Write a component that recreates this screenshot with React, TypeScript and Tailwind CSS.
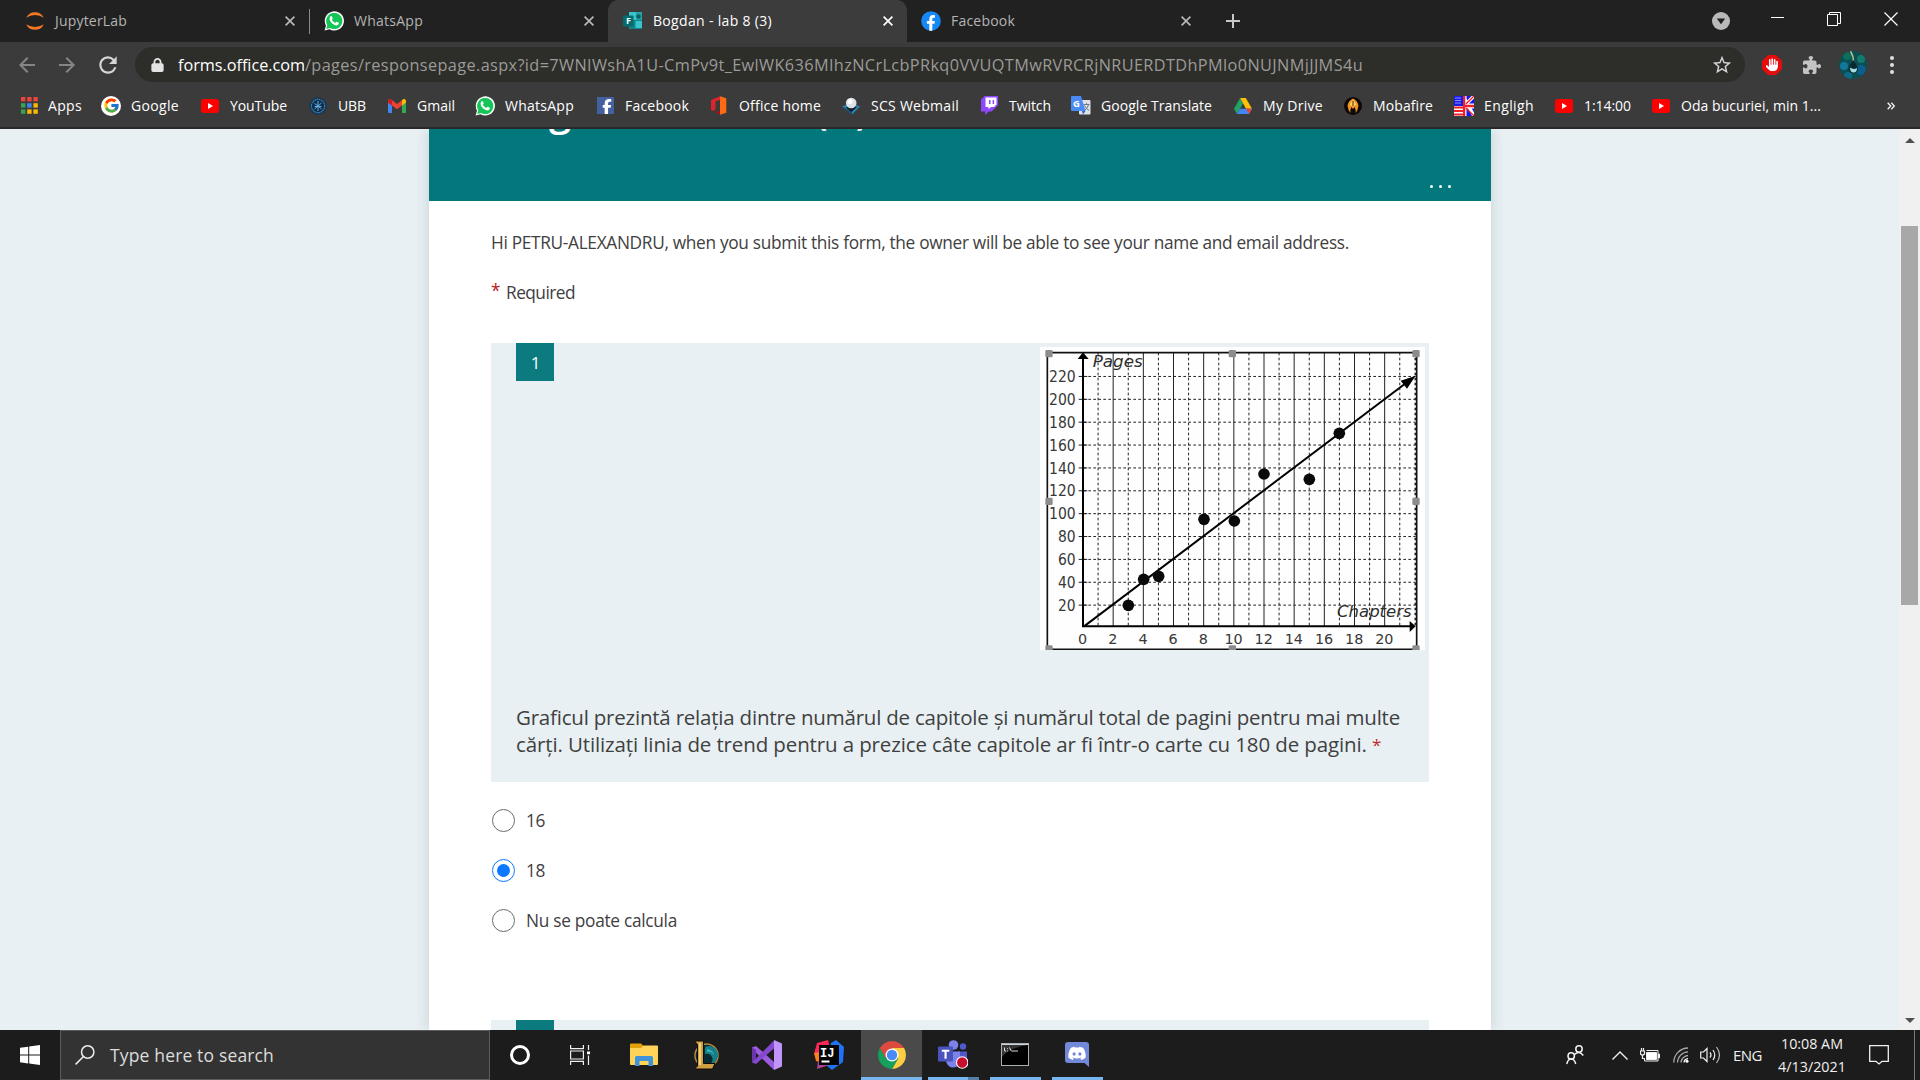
import { useLayoutEffect, useRef, type ReactNode } from "react";
import { FcGoogle } from "react-icons/fc";
import { FaDiscord, FaFacebookF, FaHand, FaLock, FaPuzzlePiece } from "react-icons/fa6";
import { MdArrowBack, MdArrowForward, MdRefresh, MdStarBorder } from "react-icons/md";

/* Single-line label whose tracking is evened out to span `w` pixels. */
function Label({ w, className = "", children }: { w: number; className?: string; children: string }) {
  const ref = useRef<HTMLSpanElement>(null);
  useLayoutEffect(() => {
    const el = ref.current;
    if (!el) return;
    el.style.letterSpacing = "0px";
    const natural = el.getBoundingClientRect().width;
    el.style.letterSpacing = `${(w - natural) / children.length}px`;
  }, [w, children]);
  return (
    <span ref={ref} className={`inline-block whitespace-pre shrink-0 ${className}`}>
      {children}
    </span>
  );
}

/* ---------- small brand icons ---------- */

const WhatsApp = () => (
  <svg viewBox="0 0 20 20" className="size-5">
    <path d="M0.6 19.6 2 14.6A9.6 9.6 0 1 1 5.6 18.2Z" fill="#fff" />
    <path d="M2.2 18 3.3 14.2A8.1 8.1 0 1 1 6 16.9Z" fill="#14c656" />
    <path d="M6.6 5.2c.5-.4 1-.3 1.3.2l.8 1.8c.1.5-.7 1.1-.8 1.5.7 1.400 1.800 2.400 3.300 3.100.5 0 .9-1.200 1.500-1.100l1.900.9c.6.4-.1 2-.8 2.400-1.400.9-3.300.1-4.900-1C7.200 11.800 5.800 9.900 5.600 8c-.1-1 .3-2.200 1-2.800Z" fill="#fff" />
  </svg>
);
const Jupyter = () => (
  <svg viewBox="0 0 20 20" className="size-5">
    <path d="M1.300 6.800Q3.500 1.200 10 1.200t8.700 5.600Q15 4.100 10 4.100T1.300 6.800Z" fill="#f37726" />
    <path d="M1.300 13.200Q3.500 18.800 10 18.800t8.700-5.600Q15 15.900 10 15.900T1.300 13.200Z" fill="#f37726" />
  </svg>
);
const Forms = () => (
  <svg viewBox="0 0 20 20" className="size-5">
    <path d="M6 1h13v17H6Z" fill="#128387" />
    <path d="M6 1h7v8H6Z" fill="#37c6d0" />
    <path d="M13 1h6v8h-6Z" fill="#25a3a8" />
    <path d="M12.500 10h6.500v7h-6.500Z" fill="#36c5cf" />
    <circle cx="15.500" cy="5.500" r="2.200" fill="#0f5f63" />
    <rect x="0" y="4.500" width="10.500" height="11" rx="0.800" fill="#036c70" />
    <text x="3" y="13.200" fill="#fff" fontSize="9" fontWeight="700" fontFamily="Open Sans, sans-serif">F</text>
  </svg>
);
const FacebookRound = () => (
  <svg viewBox="0 0 20 20" className="size-5">
    <circle cx="10" cy="10" r="9.800" fill="#1488f5" />
    <path d="M8.300 19.700v-6.900H5.900V10h2.400V7.900c0-2.500 1.400-3.800 3.600-3.800l2.100.2v2.400h-1.200c-1.200 0-1.500.7-1.500 1.500V10h2.600l-.4 2.800h-2.200v6.900Z" fill="#fff" />
  </svg>
);
const Apps = () => (
  <svg viewBox="0 0 17 17" className="size-[17px]">
    {["#e8453c", "#e8453c", "#e8453c", "#34a353", "#4285f4", "#f9b808", "#34a353", "#f9b808", "#f9b808"].map((c, i) => (
      <rect key={i} x={(i % 3) * 6.200} y={Math.floor(i / 3) * 6.200} width="4.400" height="4.400" fill={c} />
    ))}
  </svg>
);
const GoogleRound = () => (
  <span className="flex size-5 items-center justify-center rounded-full bg-white">
    <FcGoogle className="size-[17px]" />
  </span>
);
const YouTube = () => (
  <svg viewBox="0 0 18 14" className="h-[14px] w-[18px]">
    <rect width="18" height="14" rx="3" fill="#f00" />
    <path d="M7 4v6l5-3Z" fill="#fff" />
  </svg>
);
const Ubb = () => (
  <svg viewBox="0 0 18 18" className="size-[18px]">
    <circle cx="9" cy="9" r="8.700" fill="#17364f" />
    <circle cx="9" cy="9" r="6.600" fill="#0f2d49" stroke="#3d83bd" strokeWidth="1.200" strokeDasharray="1.500 .6" />
    <path d="M9 4v10M5.500 6.500l3.500 2.500 3.500-3M5.500 12 9 9l3.500 3M5.500 9.500h7" stroke="#69aee0" fill="none" />
  </svg>
);
const Gmail = () => (
  <svg viewBox="0 0 18 14" className="h-[14px] w-[18px]">
    <path d="M0 2v11a1 1 0 0 0 1 1h3V5Z" fill="#4285f4" />
    <path d="M18 2v11a1 1 0 0 1-1 1h-3V5Z" fill="#34a853" />
    <path d="M0 3.200V2C0 .2 1.800-.5 3.200.5L9 5l5-3.700v5.200L9 10.300 0 3.600Z" fill="#ea4335" />
    <path d="M14 1.200 14.800.5C16.200-.5 18 .2 18 2v1.500l-4 3Z" fill="#fbbc04" />
    <path d="M0 2.500v1.100l4 3V1.200L3.200.5C1.800-.5 0 .2 0 2Z" fill="#c5221f" />
  </svg>
);
const FacebookSquare = () => (
  <span className="flex size-[17px] items-end justify-end overflow-hidden bg-[#4460a0] pr-[2px]">
    <FaFacebookF className="h-[15px] w-[10px] text-white" />
  </span>
);
const Office = () => (
  <svg viewBox="0 0 16 19" className="h-[19px] w-4">
    <path d="M0 4 9 .3V4L4.500 5.300v8L2 15l-2-1.200Z" fill="#d8262c" />
    <path d="M9 .3 15.300 2.300V16.700L9 18.700Z" fill="#ff6a13" />
    <path d="M2.200 15 9 15.800v2.900Z" fill="#a3131c" />
  </svg>
);
const Webmail = () => (
  <svg viewBox="0 0 18 18" className="size-[18px]">
    <path d="M0 9.500 9 6l9 3.500-8 8Z" fill="#2a86b5" />
    <path d="M0 9.500 10 17.500V14Z" fill="#174f78" />
    <path d="m4 10.500 5.500 4.500 5.500-5L9 8Z" fill="#162028" />
    <circle cx="9.200" cy="6" r="5.300" fill="#dce3e6" />
    <circle cx="8" cy="4.500" r="2.500" fill="#fff" />
  </svg>
);
const Twitch = () => (
  <svg viewBox="0 0 17 19" className="h-[19px] w-[17px]">
    <path d="M3.600 0 0 3.500v12h4.200V19l3.600-3.500h2.800L17 9.200V0Z" fill="#9146ff" />
    <path d="M4.500 1.500h11v7L13 11h-3l-2.500 2.300V11h-3Z" fill="#fff" />
    <path d="M8 4h1.500v4H8Zm3.600 0h1.500v4h-1.500Z" fill="#9146ff" />
  </svg>
);
const Translate = () => (
  <svg viewBox="0 0 20 19" className="h-[19px] w-5">
    <rect x="8" y="4" width="11.500" height="14.500" rx="1" fill="#dfe1e4" />
    <path d="M0 1a1 1 0 0 1 1-1h9l4.500 15H1a1 1 0 0 1-1-1Z" fill="#4a8af4" />
    <text x="2" y="11" fill="#fff" fontSize="9.500" fontWeight="700" fontFamily="Open Sans, sans-serif">G</text>
    <path d="M12.500 8.500h6M15.500 7v1.500M17.500 8.500q-.6 3.500-3.500 5.500M13.500 9.500q1.500 3 4.500 5" stroke="#6b7a8d" fill="none" />
    <path d="M11 15h3.500L12 18.500Z" fill="#3262c4" />
  </svg>
);
const Drive = () => (
  <svg viewBox="0 0 18 16" className="h-4 w-[18px]">
    <path d="M6.200 0 0 10.700 3 16l6-10.600Z" fill="#1fa463" />
    <path d="M6.200 0h5.600L18 10.700h-6Z" fill="#ffc107" />
    <path d="M3 16l3-5.300h12L15 16Z" fill="#4285f4" />
    <path d="M12 10.700h6L15 16Z" fill="#ea4335" />
  </svg>
);
const Mobafire = () => (
  <svg viewBox="0 0 18 18" className="size-[18px]">
    <circle cx="9" cy="9" r="9" fill="#0c0908" />
    <path d="M9 1.500q4.500 2 5.500 7-.5 5-3 7.500.5-4-1-6L9 12l-1.500-2q-1.500 2-1 6-2.500-2.500-3-7.500 1-5 5.500-7Z" fill="#f0912a" />
    <path d="M9 3q2.500 1.500 3 5L9 9.500 6 8q.5-3.500 3-5Z" fill="#ffd75a" />
    <path d="M8.500 4h1v5h-1Z" fill="#40210c" />
  </svg>
);
const Flag = () => (
  <svg viewBox="0 0 20 20" className="size-5">
    <rect width="20" height="20" fill="#1518e8" />
    <path d="M9 0 20 20M20 0 9 11" stroke="#fff" strokeWidth="3.400" fill="none" />
    <path d="M10 0v20M9 10h11" stroke="#fff" strokeWidth="5" />
    <path d="M10 0v20M9 10h11" stroke="#f0202a" strokeWidth="2.600" />
    <path d="M20 0l-8 8M20 20l-8-8" stroke="#f0202a" strokeWidth="1.400" />
    <rect width="9" height="10" fill="#1a1de6" />
    <path d="M1.500 2h6M1.500 4.500h6M1.500 7h6" stroke="#fff" strokeDasharray="1 1" />
    <rect y="10" width="9" height="10" fill="#fff" />
    <path d="M0 11.500h9M0 15h9M0 18.500h9" stroke="#f0202a" strokeWidth="1.800" />
  </svg>
);

/* ---------- browser chrome ---------- */

function Close({ active = false }: { active?: boolean }) {
  return (
    <svg viewBox="0 0 10 10" className={`size-[10px] ${active ? "text-white" : "text-[#b8b8b8]"}`}>
      <path d="m.6.6 8.800 8.800M9.400.6.6 9.400" stroke="currentColor" strokeWidth="1.700" />
    </svg>
  );
}

function Tab({ icon, title, w, active = false }: { icon: ReactNode; title: string; w: number; active?: boolean }) {
  return (
    <div
      className={`flex h-[42px] w-[299px] shrink-0 items-center pr-[14px] pl-[15px] ${
        active ? "rounded-t-[10px] bg-[#3c3c3c] text-white" : "text-[#b4b4b4]"
      }`}
    >
      {icon}
      <Label w={w} className="ml-[10px] text-[14px] leading-5">
        {title}
      </Label>
      <div className="ml-auto flex">
        <Close active={active} />
      </div>
    </div>
  );
}

function TabStrip() {
  return (
    <div className="flex h-[42px] bg-[#212121]">
      <div className="w-[10px]" />
      <Tab icon={<Jupyter />} title="JupyterLab" w={72} />
      <div className="mt-[9px] -mr-px h-[25px] w-px bg-[#8a8a8a]" />
      <Tab icon={<WhatsApp />} title="WhatsApp" w={69} />
      <Tab icon={<Forms />} title="Bogdan - lab 8 (3)" w={119} active />
      <div className="-ml-px">
        <Tab icon={<FacebookRound />} title="Facebook" w={64} />
      </div>
      <svg viewBox="0 0 16 16" className="mt-[13px] ml-[20px] size-4">
        <path d="M8 1v14M1 8h14" stroke="#c8c8c8" strokeWidth="2" />
      </svg>
      <div className="ml-auto flex items-start text-white">
        <svg viewBox="0 0 18 18" className="mt-3 mr-[41px] size-[18px]">
          <circle cx="9" cy="9" r="9" fill="#b9b9b9" />
          <path d="M4.800 6.500h8.400L9 12.300Z" fill="#212121" />
        </svg>
        <div className="mt-[17px] mr-[43px] h-px w-[13px] bg-white" />
        <svg viewBox="0 0 14 14" className="mt-3 mr-[43px] size-[14px]" fill="none" stroke="currentColor">
          <path d="M.5 2.500h10v11H.5Z M2.500 2.500v-2h11v11h-3" />
        </svg>
        <svg viewBox="0 0 14 14" className="mt-3 mr-[22px] size-[14px]" fill="none" stroke="currentColor" strokeWidth="1.200">
          <path d="m.5.500 13 13M13.500.500l-13 13" />
        </svg>
      </div>
    </div>
  );
}

function AddressBar() {
  return (
    <div className="flex h-[45px] items-center bg-[#3b3b3b] pl-[15px] text-[#c9c9c9]">
      <MdArrowBack className="size-6 text-[#868686]" />
      <MdArrowForward className="ml-4 size-6 text-[#868686]" />
      <MdRefresh className="ml-4 size-[26px] text-[#d6d6d6]" />
      <div className="ml-[14px] flex h-[35px] w-[1610px] items-center rounded-full bg-[#2d2d29] pl-4">
        <FaLock className="h-[14px] w-[13px] text-[#e4e4e4]" />
        <Label w={127} className="ml-[14px] text-[16.3px] leading-6 text-white">
          forms.office.com
        </Label>
        <Label w={1058} className="text-[16.3px] leading-6 text-[#9b9b98]">
          /pages/responsepage.aspx?id=7WNIWshA1U-CmPv9t_EwlWK636MIhzNCrLcbPRkq0VVUQTMwRVRCRjNRUERDTDhPMlo0NUJNMjJJMS4u
        </Label>
        <MdStarBorder className="mr-3 ml-auto size-[22px] text-[#d6d6d6]" />
      </div>
      <svg viewBox="0 0 20 20" className="ml-[17px] size-5">
        <path d="M6 0h8l6 6v8l-6 6H6l-6-6V6Z" fill="#e40d0d" />
        <g transform="translate(3.700 3.300)">
          <FaHand size={13} color="#fff" />
        </g>
      </svg>
      <FaPuzzlePiece className="ml-[21px] size-[18px] text-[#c3c3c3]" />
      <svg viewBox="0 0 28 28" className="ml-[18px] size-7">
        <defs>
          <clipPath id="avatar">
            <circle cx="14" cy="14" r="14" />
          </clipPath>
        </defs>
        <g clipPath="url(#avatar)">
          <rect width="28" height="28" fill="#0b4f52" />
          <circle cx="5" cy="15" r="4" fill="#12779b" />
          <circle cx="22" cy="19" r="5" fill="#0c5e8c" />
          <circle cx="22" cy="8" r="4" fill="#147a6f" />
          <circle cx="8" cy="5" r="4" fill="#0c6f5c" />
          <circle cx="9" cy="25" r="4" fill="#0d6a86" />
          <path d="M11.500 0q3.500 6 3 12" stroke="#b9c58a" strokeWidth="1.500" fill="none" />
          <path d="M14.500 9q-6 7-4.600 10.800 1.700 3 5.400 2.500 4.400-1.400 3.400-5.500-1.500-4-4.200-7.800Z" fill="#082b31" />
          <path d="M11 16.500q3.500 2.500 7 .5 0 4.500-3.500 4.500T11 16.500Z" fill="#a6dce2" />
        </g>
      </svg>
      <svg viewBox="0 0 4 18" className="ml-[23px] h-[18px] w-1" fill="#e0e0e0">
        <circle cx="2" cy="2" r="2" />
        <circle cx="2" cy="9" r="2" />
        <circle cx="2" cy="16" r="2" />
      </svg>
    </div>
  );
}

const bookmarks: { icon: ReactNode; title: string; w: number; gap: string; iconBox: string }[] = [
  { icon: <Apps />, title: "Apps", w: 34, gap: "mr-[19px]", iconBox: "w-[18px] mr-[10px]" },
  { icon: <GoogleRound />, title: "Google", w: 48, gap: "mr-[21px]", iconBox: "w-5 mr-[10px]" },
  { icon: <YouTube />, title: "YouTube", w: 57, gap: "mr-[21px]", iconBox: "w-5 mr-[10px]" },
  { icon: <Ubb />, title: "UBB", w: 28, gap: "mr-[21px]", iconBox: "w-5 mr-[10px]" },
  { icon: <Gmail />, title: "Gmail", w: 38, gap: "mr-[20px]", iconBox: "w-5 mr-[10px]" },
  { icon: <WhatsApp />, title: "WhatsApp", w: 69, gap: "mr-[21px]", iconBox: "w-5 mr-[10px]" },
  { icon: <FacebookSquare />, title: "Facebook", w: 64, gap: "mr-[20px]", iconBox: "w-5 mr-[10px]" },
  { icon: <Office />, title: "Office home", w: 82, gap: "mr-[20px]", iconBox: "w-5 mr-[10px]" },
  { icon: <Webmail />, title: "SCS Webmail", w: 88, gap: "mr-[20px]", iconBox: "w-5 mr-[10px]" },
  { icon: <Twitch />, title: "Twitch", w: 42, gap: "mr-[20px]", iconBox: "w-5 mr-[10px]" },
  { icon: <Translate />, title: "Google Translate", w: 111, gap: "mr-[21px]", iconBox: "w-5 mr-[10px]" },
  { icon: <Drive />, title: "My Drive", w: 60, gap: "mr-[20px]", iconBox: "w-5 mr-[10px]" },
  { icon: <Mobafire />, title: "Mobafire", w: 60, gap: "mr-[21px]", iconBox: "w-5 mr-[10px]" },
  { icon: <Flag />, title: "Engligh", w: 50, gap: "mr-[20px]", iconBox: "w-5 mr-[10px]" },
  { icon: <YouTube />, title: "1:14:00", w: 47, gap: "mr-[20px]", iconBox: "w-5 mr-[10px]" },
  { icon: <YouTube />, title: "Oda bucuriei, min 1...", w: 140, gap: "mr-[66px]", iconBox: "w-5 mr-[10px]" },
];

function BookmarksBar() {
  return (
    <div className="flex h-[42px] items-center border-b-2 border-[#282828] bg-[#3b3b3b] pb-[3px] pl-[20px] text-white">
      {bookmarks.map((b, i) => (
        <div key={i} className={`flex shrink-0 items-center ${b.gap}`}>
          <div className={`flex shrink-0 justify-center ${b.iconBox}`}>{b.icon}</div>
          <Label w={b.w} className="text-[14px] leading-5">
            {b.title}
          </Label>
        </div>
      ))}
      <svg viewBox="0 0 8 8" className="size-2" fill="none" stroke="#eee" strokeWidth="1.400">
        <path d="m.7.700 3 3.300-3 3.300M4.300.700l3 3.300-3 3.300" />
      </svg>
    </div>
  );
}

/* ---------- form ---------- */

const px = (v: number) => 159 + v * 45.250;
const py = (v: number) => 864 - v * 3.430;
const points: [number, number][] = [
  [295, 796],
  [341, 718],
  [386, 709],
  [522, 538],
  [613, 543],
  [702, 402],
  [838, 418],
  [928, 280],
];

function Chart() {
  const evens = Array.from({ length: 10 }, (_, i) => (i + 1) * 2);
  const odds = Array.from({ length: 11 }, (_, i) => i * 2 + 1);
  const rows = Array.from({ length: 11 }, (_, i) => (i + 1) * 20);
  return (
    <svg viewBox="30 21 1155 909" className="h-[303px] w-[385px] shrink-0" fontFamily="DejaVu Sans, sans-serif">
      <rect x="30" y="21" width="1155" height="909" fill="#fefefe" />
      <g stroke="#222" strokeWidth="3">
        {evens.map((v) => (
          <path key={v} d={`M${px(v)} 38V859`} />
        ))}
      </g>
      <g stroke="#222" strokeWidth="3" strokeDasharray="8 7">
        {odds.map((v) => (
          <path key={v} d={`M${px(v)} 38V859`} />
        ))}
        {rows.map((v) => (
          <path key={v} d={`M160 ${py(v)}H1157`} />
        ))}
        <path d="M1156 38V859" strokeWidth="5" />
      </g>
      <g stroke="#222" strokeWidth="3">
        {rows.map((v) => (
          <path key={v} d={`M146 ${py(v)}H172`} />
        ))}
      </g>
      <path d="M52 928V38H1160V928Z" fill="none" stroke="#111" strokeWidth="5" />
      <path d="M159 50V859H1145" fill="none" stroke="#000" strokeWidth="6" />
      <path d="M159 37 176 57H143ZM1157 859 1139 843V876Z" />
      <path d="M162 859 1140 120" stroke="#000" strokeWidth="6" />
      <path d="M1157 107 1112 122 1131 146Z" />
      {points.map(([x, y]) => (
        <circle key={x} cx={x} cy={y} r="17.500" fill="#0a0a0a" />
      ))}
      <g fill="#383838" fontSize="46" textAnchor="end">
        {rows.map((v) => (
          <text key={v} x="137" y={py(v) + 17} textLength={v < 100 ? 53 : 80} lengthAdjust="spacingAndGlyphs">
            {v}
          </text>
        ))}
      </g>
      <g fill="#383838" fontSize="43" textAnchor="middle">
        {[0, ...evens].map((v) => (
          <text key={v} x={px(v) - 1} y="912">
            {v}
          </text>
        ))}
      </g>
      <g fill="#2e2e2e" fontSize="47" fontStyle="italic">
        <text x="188" y="82" textLength="150" lengthAdjust="spacingAndGlyphs">
          Pages
        </text>
        <text x="921" y="830" textLength="224" lengthAdjust="spacingAndGlyphs">
          Chapters
        </text>
      </g>
      <g fill="#8c8c8c">
        {[57, 607, 1158].map((x) =>
          [41, 484, 927].map((y) =>
            x === 607 && y === 484 ? null : <rect key={`${x}-${y}`} x={x - 11} y={y - 11} width="22" height="22" rx="4" />,
          ),
        )}
      </g>
    </svg>
  );
}

function Option({ text, w, checked = false }: { text: string; w: number; checked?: boolean }) {
  return (
    <div className="flex h-[50px] items-center pl-px">
      <span
        className={`flex size-[23px] items-center justify-center rounded-full border bg-white ${
          checked ? "border-[#0a78ff]" : "border-[#6b6b6b]"
        }`}
      >
        {checked && <span className="size-[13px] rounded-full bg-[#0a78ff]" />}
      </span>
      <Label w={w} className="mt-[2px] ml-[11px] text-[17.3px] leading-6">
        {text}
      </Label>
    </div>
  );
}

function FormCard() {
  return (
    <div className="flex h-[901px] w-[1062px] shrink-0 flex-col overflow-hidden bg-white text-[#404040] shadow-[0_0_14px_rgba(0,50,55,0.16)]">
      <div className="-mt-[43px] flex h-[115px] shrink-0 justify-between bg-[#03787c] pr-[40px] pl-[64px] text-white">
        <Label w={378} className="text-[40px] leading-[48px] font-semibold">
          Bogdan - lab 8 (3)
        </Label>
        <div className="mt-[99px] flex gap-[6px]">
          <span className="size-[3px] rounded-full bg-white" />
          <span className="size-[3px] rounded-full bg-white" />
          <span className="size-[3px] rounded-full bg-white" />
        </div>
      </div>
      <div className="flex flex-col px-[62px]">
        <Label w={858} className="mt-[30px] self-start text-[17.3px] leading-6">
          Hi PETRU-ALEXANDRU, when you submit this form, the owner will be able to see your name and email address.
        </Label>
        <div className="mt-[26px] flex text-[17.3px] leading-6">
          <span className="w-[15px] -translate-y-[2px] text-[#b91c1c]">*</span>
          <Label w={69}>Required</Label>
        </div>
        <div className="mt-[38px] h-[439px] bg-[#e8f0f3] pl-[25px]">
          <div className="flex h-[361px] justify-between pr-1">
            <div className="flex h-[38px] w-[38px] items-center justify-center bg-[#0b7b7f] pt-px pl-px text-[17px] text-white">1</div>
            <div className="mt-1">
              <Chart />
            </div>
          </div>
          <div className="flex flex-col items-start text-[20.500px] leading-[27px]">
            <Label w={884}>Graficul prezintă relația dintre numărul de capitole și numărul total de pagini pentru mai multe</Label>
            <div className="flex">
              <Label w={856}>cărți. Utilizați linia de trend pentru a prezice câte capitole ar fi într-o carte cu 180 de pagini. </Label>
              <span className="text-[17px] text-[#c02a2a]">*</span>
            </div>
          </div>
        </div>
        <div className="mt-[13px]">
          <Option text="16" w={19} />
          <Option text="18" w={19} checked />
          <Option text="Nu se poate calcula" w={151} />
        </div>
        <div className="mt-[75px] h-5 bg-[#e8f0f3] pl-[25px]">
          <div className="h-5 w-[38px] bg-[#0b7b7f]" />
        </div>
      </div>
    </div>
  );
}

function Page() {
  return (
    <div className="flex h-[901px] overflow-hidden bg-[#e8f0f3]">
      <div className="flex flex-1 overflow-hidden pl-[429px]">
        <FormCard />
      </div>
      <div className="flex w-[21px] flex-col items-center bg-[#f0f0f0] py-[9px]">
        <div className="size-0 border-x-[5px] border-b-[5px] border-x-transparent border-b-[#505050]" />
        <div className="mt-[83px] h-[379px] w-[17px] bg-[#a8a8a8]" />
        <div className="mt-auto mb-[-2px] size-0 border-x-[5px] border-t-[5px] border-x-transparent border-t-[#505050]" />
      </div>
    </div>
  );
}

/* ---------- taskbar ---------- */

const Explorer = () => (
  <svg viewBox="0 0 28 24" className="h-6 w-7">
    <path d="M0 1.500A1 1 0 0 1 1 .500h10l2.500 2.500V8H0Z" fill="#e3a008" />
    <path d="M0 5h11l2.500-2.500H27a1 1 0 0 1 1 1V21a1 1 0 0 1-1 1H1a1 1 0 0 1-1-1Z" fill="#ffd258" />
    <path d="M5 23V14.500a1.500 1.500 0 0 1 1.500-1.500h15a1.500 1.500 0 0 1 1.500 1.500V23h-4.500v-5h-9v5Z" fill="#3d94d9" />
  </svg>
);
const League = () => (
  <svg viewBox="0 0 30 30" className="size-[30px]">
    <circle cx="15.500" cy="15.500" r="11.500" fill="#0a2a33" stroke="#b58a3c" strokeWidth="1.500" />
    <path d="M14 7a9 9 0 1 1 5 17q4-3 2-7t-7-3Z" fill="#157f8a" />
    <path d="M16 9q6 1 7 6-3-4-7-3Z" fill="#31b7b3" />
    <path d="M3.500 1H12.500v22.500h11.500L21.500 29H3.500L6.500 26V4.500Z" fill="#d0a046" stroke="#100c05" strokeWidth="1" />
    <path d="M8 3h2v22H8Z" fill="#f0cf7c" />
  </svg>
);
const VisualStudio = () => (
  <svg viewBox="0 0 30 30" className="size-[30px]">
    <path d="M0 7.500 4 6 22 22v8L0 9Z" fill="#9a5cdc" />
    <path d="M0 7.500V22.500l4-3V10Z" fill="#6b35b0" />
    <path d="M0 22.500 22 .5v8L4 24Z" fill="#8448cc" />
    <path d="M22 0 30 3.500v23L22 30Z" fill="#c094fa" />
  </svg>
);
const IntelliJ = () => (
  <svg viewBox="0 0 30 30" className="size-[30px]">
    <path d="M3 3 14 0 16 8 6 20 0 14Z" fill="#fe2857" />
    <path d="M0 13l7-1v11l-5-2Z" fill="#fc801d" />
    <path d="M17 3 22 0l8 7-1 15-11 8-6-5Z" fill="#1f74f5" />
    <path d="M4 21 18 24 3 29Z" fill="#b04596" />
    <rect x="5" y="5" width="20" height="20" fill="#050505" />
    <text x="6" y="16.500" fill="#fff" fontSize="12" fontWeight="700" fontFamily="Liberation Mono, monospace">IJ</text>
    <path d="M7.500 20.500h8v2h-8Z" fill="#fff" />
  </svg>
);
const Chrome = () => (
  <svg viewBox="0 0 28 28" className="size-7">
    <path d="M14 7H26.100A14 14 0 0 1 14 28l6-10.500Z" fill="#fdcd41" />
    <path d="M1.900 7A14 14 0 0 0 14 28l6-10.500L8 17.500Z" fill="#16a05d" />
    <path d="M14 7H26.100A14 14 0 0 0 1.900 7L8 17.500Z" fill="#dd4b3e" />
    <circle cx="14" cy="14" r="6.500" fill="#fff" />
    <circle cx="14" cy="14" r="5.200" fill="#4a8af4" />
  </svg>
);
const Teams = () => (
  <svg viewBox="0 0 30 30" className="size-[30px]">
    <circle cx="15.500" cy="5" r="4.800" fill="#7b83eb" />
    <circle cx="25" cy="6.500" r="3.200" fill="#5059c9" />
    <path d="M20 11.500h9v9q-2 5-7 4Z" fill="#5059c9" />
    <path d="M9 11.500h13v11q-2 5-7 5t-7-6Z" fill="#7b83eb" />
    <rect x="0" y="6.500" width="15" height="15" rx="1" fill="#4b53bc" />
    <path d="M3.800 9.800h7.500v2H8.600v7H6.500v-7H3.800Z" fill="#fff" />
    <circle cx="24.200" cy="22.500" r="5.700" fill="#c50f2c" stroke="#fff" strokeWidth="1.100" />
  </svg>
);
const Terminal = () => (
  <svg viewBox="0 0 28 23" className="h-[23px] w-7">
    <rect x=".5" y=".5" width="27" height="22" fill="#000" stroke="#a9b0b3" />
    <path d="M1 1h26v1H1Z" fill="#cfd6d8" />
    <path d="M1 2h26Q8 5 1 14Z" fill="#353535" />
    <path d="M3.500 4.500v3.500h1.500M6.500 5v.8M6.500 7.500v.8M8.500 4.500l2 3.800M11 8h6" stroke="#ddd" fill="none" />
  </svg>
);
const Discord = () => (
  <svg viewBox="0 0 24 25" className="h-[25px] w-6">
    <path d="M3 0h18a3 3 0 0 1 3 3v22l-4.500-4H3a3 3 0 0 1-3-3V3a3 3 0 0 1 3-3Z" fill="#7289da" />
    <g transform="translate(2.500 1.800)">
      <FaDiscord size={19} color="#fff" />
    </g>
  </svg>
);

function TaskButton({ icon, w, gap, state = "closed" }: { icon: ReactNode; w: string; gap: string; state?: "closed" | "open" | "active" }) {
  return (
    <div className={`flex h-[50px] shrink-0 flex-col ${w} ${gap} ${state === "active" ? "bg-[#4a4a4a]" : ""}`}>
      <div className={`flex flex-1 items-center justify-center ${state === "open" ? "pt-px pr-[2px]" : "pt-[3px]"}`}>{icon}</div>
      <div className={`h-[3px] ${state === "closed" ? "" : "bg-[#76b5ee]"}`} />
    </div>
  );
}

function Taskbar() {
  return (
    <div className="flex h-[50px] items-center bg-[#1c1c1c] text-white">
      <svg viewBox="0 0 20 20" className="ml-5 size-5" fill="#fff">
        <path d="M0 2.800 8.200 1.700V9.500H0ZM9.200 1.500 20 0V9.500H9.200ZM0 10.500h8.200v7.900L0 17.200ZM9.200 10.500H20V20L9.200 18.500Z" />
      </svg>
      <div className="ml-5 flex h-[50px] w-[430px] shrink-0 items-center border border-[#5c5c5c] bg-[#333]">
        <svg viewBox="0 0 20 20" className="ml-[14px] size-5" fill="none" stroke="#eee" strokeWidth="1.500">
          <circle cx="12.700" cy="7" r="6.200" />
          <path d="M8.500 11.500.6 19.400" />
        </svg>
        <Label w={164} className="ml-[15px] text-[17.500px] leading-6 text-[#dcdcdc]">
          Type here to search
        </Label>
      </div>
      <span className="ml-5 size-5 rounded-full border-[3px] border-white" />
      <svg viewBox="0 0 20 20" className="ml-[40px] size-5" fill="none" stroke="#eee" strokeWidth="1.200">
        <path d="M.6 0v3.600h12.800V0M.6 20v-3.600h12.800V20M.6 6h12.800v8H.6ZM18.500 0v5M18.500 10.500V20" />
        <path d="M17 6.500h3V9.200h-3Z" fill="#fff" stroke="none" />
      </svg>
      <TaskButton icon={<Explorer />} w="w-[60px]" gap="ml-[24px]" />
      <TaskButton icon={<League />} w="w-[60px]" gap="ml-[2px]" />
      <TaskButton icon={<VisualStudio />} w="w-[60px]" gap="ml-[1px]" />
      <TaskButton icon={<IntelliJ />} w="w-[60px]" gap="ml-[2px]" />
      <TaskButton icon={<Chrome />} w="w-[61px]" gap="ml-[2px]" state="active" />
      <div className="ml-[6px] flex h-[50px] w-[51px] flex-col">
        <div className="flex flex-1 items-center pt-[3px] pl-[10px]">
          <Teams />
        </div>
        <div className="flex h-[3px]">
          <div className="w-10 bg-[#76b5ee]" />
          <div className="w-[11px] bg-[#5580a8]" />
        </div>
      </div>
      <TaskButton icon={<Terminal />} w="w-[51px]" gap="ml-[11px]" state="open" />
      <TaskButton icon={<Discord />} w="w-[51px]" gap="ml-[11px]" state="open" />

      <div className="ml-auto flex h-[50px] items-center text-[#f0f0f0]">
        <svg viewBox="0 0 18 20" className="h-5 w-[18px]" fill="none" stroke="currentColor" strokeWidth="1.500">
          <circle cx="13" cy="4" r="3.200" />
          <path d="M8.500 9.500Q13 5 17.300 10.500" />
          <circle cx="5.200" cy="11" r="3.200" />
          <path d="M.8 19q1-5 4.400-5t4.500 5" />
        </svg>
        <svg viewBox="0 0 16 9" className="ml-7 h-[9px] w-4" fill="none" stroke="currentColor" strokeWidth="1.400">
          <path d="M.5 8.500 8 1l7.500 7.500" />
        </svg>
        <svg viewBox="0 0 20 14" className="ml-3 h-[14px] w-5" fill="none" stroke="currentColor">
          <path d="M6.500 2.500h11.500v10.500H4.500V10" />
          <path d="M6.500 4.500h10v7h-10Z" fill="#fff" />
          <path d="M18.500 6h1v4h-1Z" fill="#fff" />
          <path d="M.5 3h4v3q-2 2-4 0ZM1.500 0v3M3.500 0v3M2.500 7v3.500h2" strokeWidth="1.200" />
        </svg>
        <svg viewBox="0 0 16 16" className="ml-[13px] size-4" fill="none" stroke="#a8a8a8" strokeWidth="1.300">
          <path d="M.8 15.500A14.500 14.500 0 0 1 15 1M4.500 15.500A11 11 0 0 1 15 4.800M8 15.500A7.500 7.500 0 0 1 15 8.500" />
          <path d="M11 15.500a4.500 4.500 0 0 1 4-3.800" stroke="#fff" />
          <circle cx="14" cy="14.300" r="1.500" fill="#fff" stroke="none" />
        </svg>
        <svg viewBox="0 0 21 18" className="ml-[11px] h-[18px] w-[21px]" fill="none" stroke="currentColor" strokeWidth="1.200">
          <path d="M.7 6v6h2.800L7 15.500V2.500L3.500 6Z" />
          <path d="M10 6.300q2 2.700 0 5.400M13 4q3.500 5 0 10" />
          <path d="M16.500 1q6 8 0 16" stroke="#bbb" />
        </svg>
        <Label w={29} className="ml-[12px] text-[15px] leading-6">
          ENG
        </Label>
        <div className="ml-[16px] flex w-[68px] flex-col items-center text-[14.300px] leading-[23px]">
          <Label w={62}>10:08 AM</Label>
          <Label w={68}>4/13/2021</Label>
        </div>
        <svg viewBox="0 0 20 20" className="ml-[23px] size-5" fill="none" stroke="currentColor" strokeWidth="1.300">
          <path d="M.7.700h18.600v15.600H13L10 19l-3-2.700H.7Z" />
        </svg>
        <div className="ml-[25px] h-[50px] w-px bg-[#7a7a7a]" />
        <div className="w-[5px]" />
      </div>
    </div>
  );
}

export default function App() {
  return (
    <div className="h-[1080px] w-[1920px] overflow-hidden bg-[#212121] font-['Open_Sans',sans-serif]">
      <TabStrip />
      <AddressBar />
      <BookmarksBar />
      <Page />
      <Taskbar />
    </div>
  );
}
